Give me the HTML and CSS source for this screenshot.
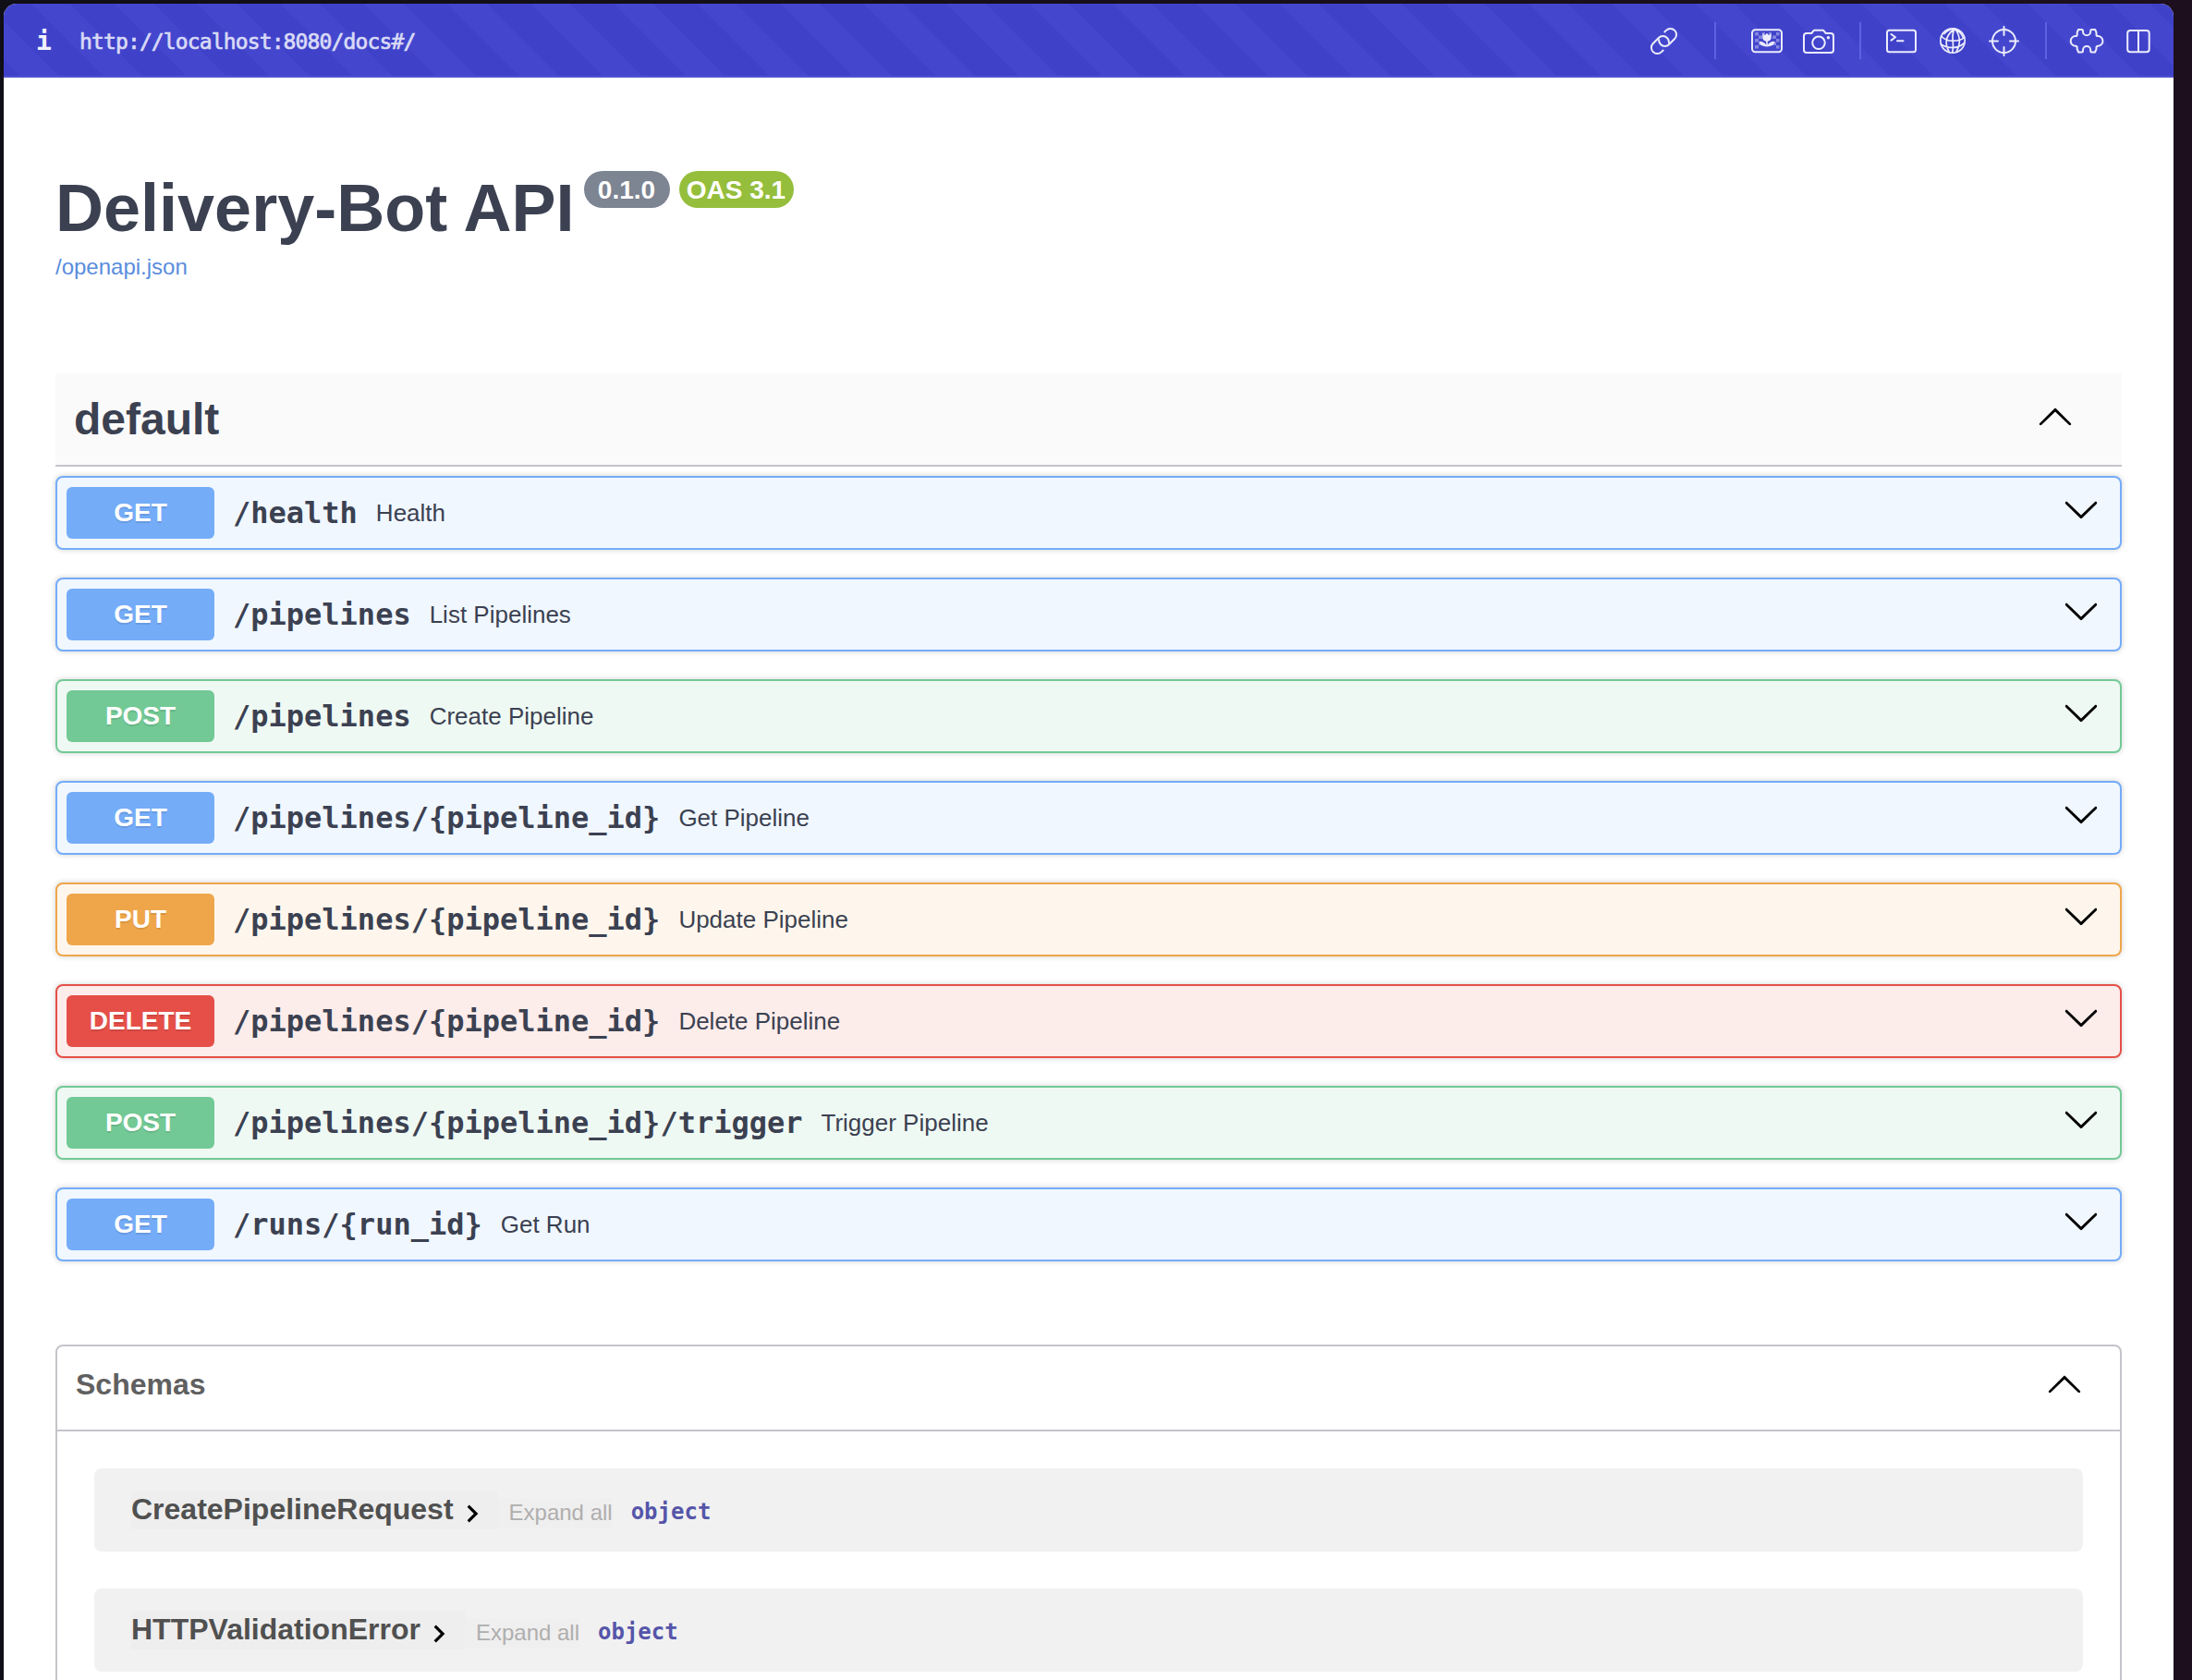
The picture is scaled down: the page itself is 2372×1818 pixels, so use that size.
FILE: index.html
```html
<!DOCTYPE html>
<html lang="en">
<head>
<meta charset="utf-8">
<title>Delivery-Bot API</title>
<link rel="stylesheet" href="styles.css">
</head>
<body>
<svg class="defs" width="0" height="0">
  <symbol id="down" viewBox="0 0 20 20"><path d="M17.418 6.109c.272-.268.709-.268.979 0s.271.701 0 .969l-7.908 7.83c-.27.268-.707.268-.979 0l-7.908-7.83c-.27-.268-.27-.701 0-.969s.709-.268.979 0L10 13.25z"/></symbol>
  <symbol id="up" viewBox="0 0 20 20"><path d="M17.418 14.908c.272.268.709.268.979 0s.271-.701 0-.969l-7.908-7.83c-.27-.268-.707-.268-.979 0l-7.908 7.83c-.27.268-.27.701 0 .969s.709.268.979 0L10 7.767z"/></symbol>
  <symbol id="right" viewBox="0 0 24 24"><path d="M10 6L8.59 7.41 13.17 12l-4.58 4.59L10 18l6-6z"/></symbol>
</svg>
<div class="window">
  <header class="bar">
    <span class="info">i</span>
    <span class="url">http://localhost:8080/docs#/</span>
    <nav class="tools">
      <svg class="icon" viewBox="0 0 40 40"><g transform="rotate(-45 20.5 20.5)"><path d="M12.800 27H10.500a6.500 6.500 0 0 1 0-13h8.500a6.500 6.500 0 0 1 6.500 6.500a6.500 6.500 0 0 1-2.200 4.900"/><path d="M28.200 14h2.300a6.500 6.500 0 0 1 0 13h-8.500a6.500 6.500 0 0 1-6.500-6.500a6.500 6.500 0 0 1 2.200-4.900"/></g></svg>
      <i class="sep sep-wide"></i>
      <svg class="icon" viewBox="0 0 40 40"><g class="checks"><path d="M7 11h4v3.500h-4zM15 11h3v3.500h-3zM22 11h3v3.500h-3zM30 11h3.500v3.500H30zM11 14.500h4V18h-4zM26 14.500h4V18h-4zM7 18h4v3.500H7zM30 18h3.500v3.500H30zM11 21.500h4V25h-4zM26 21.500h4V25h-4zM7 25h4v3.500H7zM30 25h3.500v3.500H30z"/></g><rect x="4" y="8.200" width="32" height="24" rx="3.500"/><path class="solid" d="M15.300 12.200l2.500 2 2.200-2.400 2.200 2.400 2.500-2v4.300c0 2.600-1.800 4-3.900 4.200v4.100c1-2.300 3.500-4 7.700-4-.7 3.600-3.400 5.700-8.500 5.700s-7.800-2.100-8.500-5.700c4.200 0 6.700 1.700 7.700 4v-4.100c-2.100-.2-3.900-1.600-3.900-4.200z"/></svg>
      <svg class="icon" viewBox="0 0 40 40"><path d="M7 12h5.200l2.700-3.200h10.200l2.700 3.200H33a3 3 0 0 1 3 3v14.900a3 3 0 0 1-3 3H7a3 3 0 0 1-3-3V15a3 3 0 0 1 3-3z"/><circle cx="20" cy="22.300" r="6.800"/><circle class="solid" cx="30.400" cy="16.800" r="1.700"/></svg>
      <i class="sep sep-tight"></i>
      <svg class="icon" viewBox="0 0 40 40"><rect x="5" y="8.800" width="31" height="23.500" rx="2.500"/><path d="M9.500 13l4.500 3.300-4.500 3.300M16 20.300h6.500"/></svg>
      <svg class="icon globe" viewBox="0 0 40 40"><circle cx="20" cy="20" r="13.200"/><path d="M22 7c-5 4-8.500 8-8.800 13.500-.2 4.500 1 8.500 3.200 12M22 7c-2 4-2.300 8-1.800 13 .4 5 .5 9-.5 13M22 7c3 3 5 7 5.300 12 .3 4-.8 8.500-3.300 13M22 7c-5 .5-8.500 2.500-11 5.500M22 7c4.500 2 7.700 5.500 9.300 9.500M8 15.500c3 3 7 4.700 12 4.700s10-1 12.500-3.700M7.500 24c3.500 2.500 8 3.500 12.500 3.500s8.500-1.500 12-4.500"/></svg>
      <svg class="icon" viewBox="0 0 40 40"><circle cx="19.500" cy="20.500" r="12.500"/><path d="M19.500 5v9M19.500 27v9M4 20.500h9M26 20.500h9"/></svg>
      <i class="sep sep-tight"></i>
      <svg class="icon" viewBox="0 0 40 40"><path d="M11 8h3.500q1.500 0 1.500 1.500v.7a4.100 4.100 0 0 0 8.200 0v-.7q0-1.500 1.500-1.500h3.500l1.300 3.200v2.300q0 1.600 1.700 1.600a5.300 5.300 0 0 1 0 10.600q-1.700 0-1.700 1.600v1.800l-1.500 3.400h-3.300q-1.500 0-1.500-1.500v-1a4.100 4.100 0 0 0-8.200 0v1q0 1.500-1.500 1.500H11.200l-1.500-3.400v-1.800q0-1.600-1.700-1.600a5.300 5.300 0 0 1 0-10.600q1.700 0 1.700-1.600v-2.300z"/></svg>
      <svg class="icon" viewBox="0 0 40 40"><rect x="8.200" y="8.900" width="23.500" height="23.300" rx="3"/><path d="M20 9v23"/></svg>
    </nav>
  </header>
  <main class="page">
    <div class="heading">
      <h1>Delivery-Bot API</h1>
      <span class="pill version">0.1.0</span>
      <span class="pill oas">OAS 3.1</span>
    </div>
    <a class="spec">/openapi.json</a>

    <section class="tag">
      <div class="tag-head"><h2>default</h2><svg class="arrow"><use href="#up"/></svg></div>
      <div class="ops">
        <div class="op get"><b class="method">GET</b><code>/health</code><span class="summary">Health</span><svg class="arrow"><use href="#down"/></svg></div>
        <div class="op get"><b class="method">GET</b><code>/pipelines</code><span class="summary">List Pipelines</span><svg class="arrow"><use href="#down"/></svg></div>
        <div class="op post"><b class="method">POST</b><code>/pipelines</code><span class="summary">Create Pipeline</span><svg class="arrow"><use href="#down"/></svg></div>
        <div class="op get"><b class="method">GET</b><code>/pipelines/{pipeline_id}</code><span class="summary">Get Pipeline</span><svg class="arrow"><use href="#down"/></svg></div>
        <div class="op put"><b class="method">PUT</b><code>/pipelines/{pipeline_id}</code><span class="summary">Update Pipeline</span><svg class="arrow"><use href="#down"/></svg></div>
        <div class="op delete"><b class="method">DELETE</b><code>/pipelines/{pipeline_id}</code><span class="summary">Delete Pipeline</span><svg class="arrow"><use href="#down"/></svg></div>
        <div class="op post"><b class="method">POST</b><code>/pipelines/{pipeline_id}/trigger</code><span class="summary">Trigger Pipeline</span><svg class="arrow"><use href="#down"/></svg></div>
        <div class="op get"><b class="method">GET</b><code>/runs/{run_id}</code><span class="summary">Get Run</span><svg class="arrow"><use href="#down"/></svg></div>
      </div>
    </section>

    <section class="schemas">
      <div class="schemas-head"><h3>Schemas</h3><svg class="arrow"><use href="#up"/></svg></div>
      <div class="schema-list">
        <div class="schema"><span class="schema-name">CreatePipelineRequest<svg class="caret"><use href="#right"/></svg></span><span class="expand">Expand all</span><b class="type">object</b></div>
        <div class="schema"><span class="schema-name">HTTPValidationError<svg class="caret"><use href="#right"/></svg></span><span class="expand">Expand all</span><b class="type">object</b></div>
      </div>
    </section>
  </main>
</div>
</body>
</html>
```

FILE: styles.css
```css
* { box-sizing: border-box; }

body {
  margin: 0;
  height: 1818px;
  overflow: hidden;
  padding: 4px 20px 0 4px;
  background: linear-gradient(90deg, #100e17, #1d0f1e);
  color: #3b4151;
  font-family: "Liberation Sans", Arial, sans-serif;
}

.defs { position: absolute; }

h1, h2, h3 { margin: 0; font-weight: bold; }

.window {
  height: 1814px;
  overflow: hidden;
  background: #fff;
  border-radius: 14px 14px 0 0;
}

/* browser bar */
.bar {
  height: 80px;
  display: flex;
  align-items: center;
  padding: 0 18px 0 35px;
  color: #d9daf6;
  font-family: "DejaVu Sans Mono", monospace;
  background: repeating-linear-gradient(45deg, #3f42c9 0, #3f42c9 14.14px, #4447cd 14.14px, #4447cd 43.84px, #3f42c9 43.84px, #3f42c9 63.64px);
  box-shadow: inset 0 -2px 0 #5053cf;
}
.info { width: 47px; padding-top: 1px; font-size: 28px; font-weight: bold; color: #f1f1fd; }
.url { padding-top: 2px; font-size: 23px; letter-spacing: -0.87px; -webkit-text-stroke: 0.7px #d9daf6; }
.tools { margin-left: auto; display: flex; align-items: center; gap: 16px; }
.icon {
  width: 40px;
  height: 40px;
  fill: none;
  stroke: #ececfc;
  stroke-width: 2;
  stroke-linecap: round;
  stroke-linejoin: round;
}
.icon.globe { stroke-width: 1.7; }
.icon .solid { fill: #ececfc; stroke: none; }
.icon .checks { fill: #8486e0; stroke: none; }
.sep { width: 2px; height: 40px; background: #5e61e2; }
.sep-wide { margin: 0 19px; }
.sep-tight { margin: 0 7px 0 8px; }

/* document */
.page { padding: 99px 56px 0; }
.heading { display: flex; align-items: flex-start; height: 88px; }
h1 { font-size: 72px; line-height: 84px; margin-right: 11px; white-space: nowrap; }
.pill {
  height: 40px;
  margin: 2px 10px 0 0;
  padding-right: 2px;
  border-radius: 20px;
  color: #fff;
  font-size: 28px;
  font-weight: bold;
  line-height: 41px;
  text-align: center;
}
.version { width: 93px; background: #7d8492; }
.oas { width: 124px; background: #95be3c; }
.spec { display: block; font-size: 24px; line-height: 36px; color: #5a8ddd; }

.tag { margin-top: 97px; }
.tag-head {
  height: 101px;
  display: flex;
  justify-content: space-between;
  padding: 0 52px 0 20px;
  background: #fafafa;
  border-bottom: 2px solid #c4c5ca;
}
h2 { font-size: 48px; line-height: 99px; }
.arrow { width: 40px; height: 40px; fill: #000; }
.tag-head .arrow { margin-top: 26px; }

.ops { display: flex; flex-direction: column; gap: 30px; padding-top: 10px; }
.op {
  height: 80px;
  display: flex;
  align-items: center;
  padding: 0 22px 0 10px;
  border: 2px solid;
  border-radius: 8px;
  box-shadow: 0 0 6px rgba(0, 0, 0, .19);
}
.op .arrow { margin: 0 0 8px auto; }
.method {
  width: 160px;
  height: 56px;
  margin-right: 20px;
  border-radius: 6px;
  color: #fff;
  font-size: 28px;
  line-height: 56px;
  text-align: center;
  text-shadow: 0 2px 0 rgba(0, 0, 0, .1);
}
code {
  margin-right: 20px;
  font: bold 32px "DejaVu Sans Mono", monospace;
}
.summary { font-size: 26px; }
.get { border-color: #74acf8; background: #f0f7ff; }
.get .method { background: #74acf8; }
.post { border-color: #72c995; background: #eff9f3; }
.post .method { background: #72c995; }
.put { border-color: #efa64b; background: #fef6ec; }
.put .method { background: #efa64b; }
.delete { border-color: #e54f48; background: #fcecea; }
.delete .method { background: #e54f48; }

.schemas {
  height: 500px;
  margin-top: 90px;
  border: 2px solid #c4c5ca;
  border-radius: 8px;
}
.schemas-head {
  height: 92px;
  display: flex;
  justify-content: space-between;
  padding: 0 40px 0 20px;
  border-bottom: 2px solid #c4c5ca;
}
h3 { font-size: 32px; line-height: 83px; color: #606060; }
.schemas-head .arrow { margin-top: 20px; }
.schema-list { display: flex; flex-direction: column; gap: 40px; padding: 40px; }
.schema {
  height: 90px;
  display: flex;
  align-items: flex-start;
  padding: 24px 40px 0;
  background: #f1f1f1;
  border-radius: 8px;
}
.schema-name {
  height: 42px;
  display: flex;
  font-size: 32px;
  font-weight: bold;
  line-height: 41px;
  color: #505050;
  background: #eeeeee;
}
.caret { width: 38px; height: 38px; margin: 6px 9px 0 1px; fill: #000; }
.expand {
  height: 32px;
  margin: 9px 20px 0 0;
  padding-left: 12px;
  font-size: 24px;
  line-height: 29px;
  color: #afaeae;
  background: #efefef;
}
.type {
  margin-top: 9px;
  font: bold 24px/29px "DejaVu Sans Mono", monospace;
  color: #5555a9;
}
```
